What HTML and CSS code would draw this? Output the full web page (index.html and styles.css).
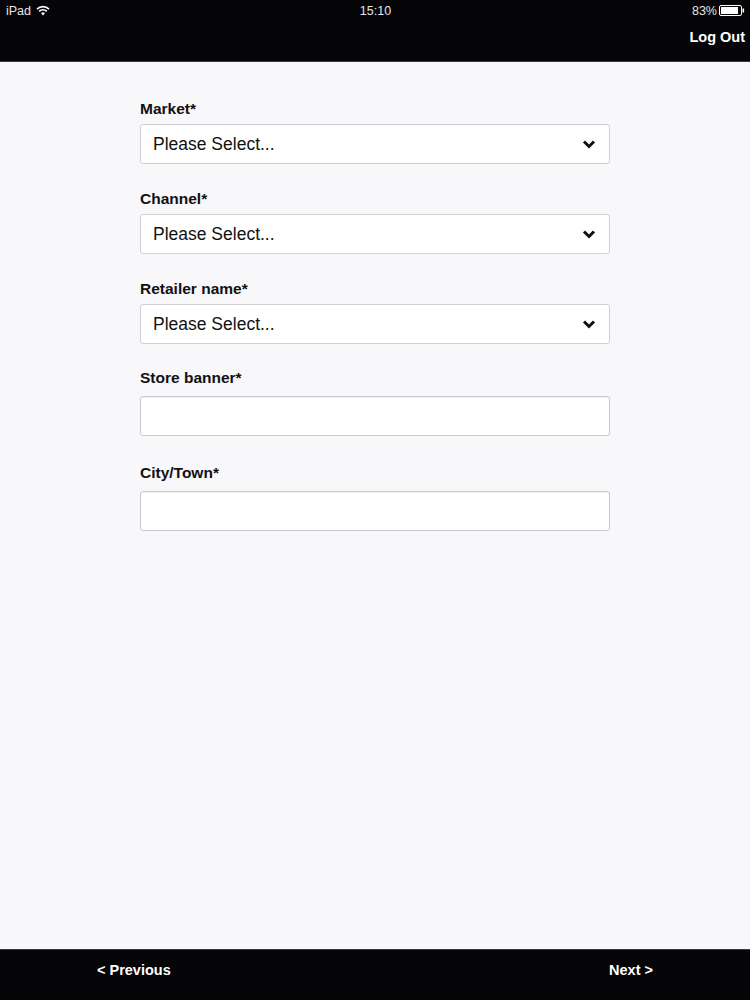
FILE: index.html
```html
<!DOCTYPE html>
<html lang="en">
<head>
<meta charset="utf-8">
<title>Store details</title>
<link rel="stylesheet" href="styles.css">
</head>
<body>
<div class="app">
  <header class="topbar">
    <div class="status">
      <div class="status-left">
        <span>iPad</span>
        <svg class="wifi" width="14" height="11" viewBox="0 0 14 11">
          <path d="M1 4.2 A8.5 8.5 0 0 1 13 4.2" fill="none" stroke="#fff" stroke-width="1.7"/>
          <path d="M3.2 6.3 A5.4 5.4 0 0 1 10.8 6.3" fill="none" stroke="#fff" stroke-width="1.7"/>
          <path d="M7 10.4 L5.1 8.3 A2.7 2.7 0 0 1 8.9 8.3 Z" fill="#fff"/>
        </svg>
      </div>
      <div class="status-time">15:10</div>
      <div class="status-right">
        <span>83%</span>
        <svg class="battery" width="26" height="11" viewBox="0 0 26 11">
          <rect x="0.5" y="0.5" width="22" height="10" rx="1.5" fill="none" stroke="#fff" stroke-width="1"/>
          <rect x="2" y="2" width="17" height="7" fill="#fff"/>
          <rect x="23.5" y="3.5" width="1.6" height="4" fill="#fff"/>
        </svg>
      </div>
    </div>
    <div class="nav">
      <a class="logout" href="#">Log Out</a>
    </div>
  </header>

  <main class="content">
    <form class="form">
      <div class="group">
        <label class="label">Market*</label>
        <div class="select">
          <span>Please Select...</span>
          <svg class="chev" width="14" height="10" viewBox="0 0 14 10"><polyline points="2,2.5 7,7.5 12,2.5" fill="none" stroke="#111" stroke-width="3"/></svg>
        </div>
      </div>
      <div class="group">
        <label class="label">Channel*</label>
        <div class="select">
          <span>Please Select...</span>
          <svg class="chev" width="14" height="10" viewBox="0 0 14 10"><polyline points="2,2.5 7,7.5 12,2.5" fill="none" stroke="#111" stroke-width="3"/></svg>
        </div>
      </div>
      <div class="group group-last-select">
        <label class="label">Retailer name*</label>
        <div class="select">
          <span>Please Select...</span>
          <svg class="chev" width="14" height="10" viewBox="0 0 14 10"><polyline points="2,2.5 7,7.5 12,2.5" fill="none" stroke="#111" stroke-width="3"/></svg>
        </div>
      </div>
      <div class="group group-text">
        <label class="label">Store banner*</label>
        <input class="input" type="text">
      </div>
      <div class="group group-text">
        <label class="label">City/Town*</label>
        <input class="input" type="text">
      </div>
    </form>
  </main>

  <footer class="bottombar">
    <a class="prev" href="#">&lt; Previous</a>
    <a class="next" href="#">Next &gt;</a>
  </footer>
</div>
</body>
</html>
```

FILE: styles.css
```css
* { box-sizing: border-box; }
html, body { margin: 0; padding: 0; }
body {
  font-family: "Liberation Sans", Arial, sans-serif;
  background: #f8f7fa;
  color: #111;
}
.app {
  height: 1000px;
  display: flex;
  flex-direction: column;
}
.topbar {
  background: #050406;
  height: 62px;
  border-bottom: 1px solid #3a393c;
  color: #fff;
}
.status {
  height: 21px;
  display: grid;
  grid-template-columns: 1fr auto 1fr;
  align-items: center;
  padding: 0 5px 0 6px;
  font-size: 12.5px;
  color: #e6e6e6;
}
.status-left { display: flex; align-items: center; gap: 5px; }
.status-time { text-align: center; }
.status-right { display: flex; align-items: center; justify-content: flex-end; gap: 2px; }
.wifi { display: block; }
.battery { display: block; }
.nav {
  display: flex;
  justify-content: flex-end;
  align-items: center;
  height: 32px;
  padding-right: 5px;
}
.logout {
  color: #fff;
  text-decoration: none;
  font-weight: bold;
  font-size: 14.5px;
}
.content {
  flex: 1;
  padding-top: 38px;
}
.form {
  width: 470px;
  margin-left: 140px;
}
.group { margin-bottom: 26px; }
.group-last-select { margin-bottom: 25px; }
.group-text { margin-bottom: 28px; }
.label {
  display: block;
  font-weight: bold;
  font-size: 15.5px;
  line-height: 18px;
  margin-bottom: 6px;
  color: #111;
}
.group-text .label { margin-bottom: 9px; }
.select {
  height: 40px;
  background: #fff;
  border: 1px solid #d0cfd3;
  border-radius: 3px;
  display: flex;
  align-items: center;
  justify-content: space-between;
  padding: 0 13px 0 12px;
  font-size: 17.5px;
  color: #111;
}
.chev { display: block; }
.input {
  display: block;
  width: 100%;
  height: 40px;
  background: #fff;
  border: 1px solid #c9c8cc;
  border-radius: 3px;
  box-shadow: inset 0 1px 1px rgba(0,0,0,0.06);
  font-size: 17px;
  padding: 0 12px;
  outline: none;
}
.bottombar {
  height: 51px;
  background: #050406;
  border-top: 1px solid #3a393c;
  display: flex;
  align-items: center;
  padding-bottom: 10px;
}
.prev, .next {
  color: #fff;
  text-decoration: none;
  font-weight: bold;
  font-size: 14.5px;
}
.prev { margin-left: 97px; }
.next { margin-left: auto; margin-right: 97px; }
```
